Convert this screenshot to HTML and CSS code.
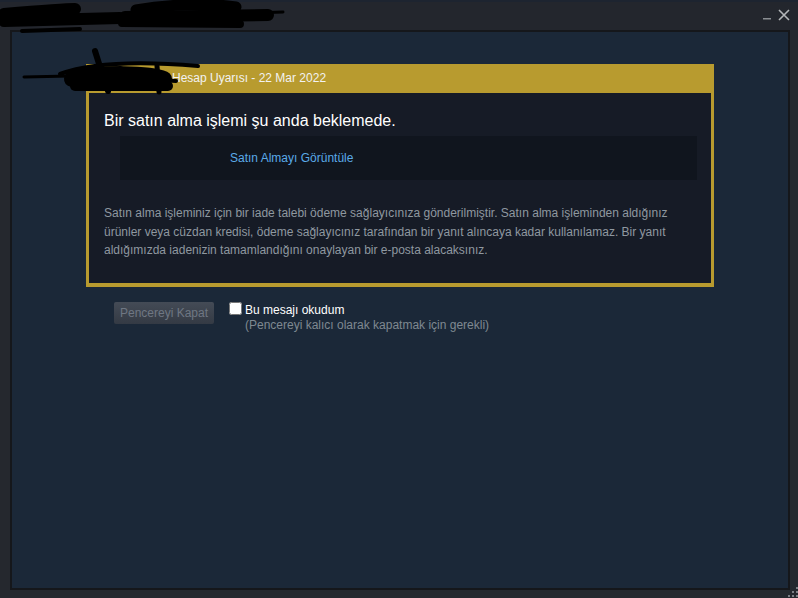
FILE: index.html
```html
<!DOCTYPE html>
<html lang="tr">
<head>
    <meta charset="UTF-8">
    <meta name="viewport" content="width=device-width, initial-scale=1.0">
    <title>Hesap Uyarısı</title>
    <link rel="stylesheet" href="styles.css">
</head>
<body>
    <div class="window">
        <div class="titlebar">
            <div class="controls">
                <svg class="minimize" width="10" height="10" viewBox="0 0 10 10"><rect x="1" y="8" width="8" height="1.5" fill="#8a8d92"/></svg>
                <svg class="close" width="12" height="12" viewBox="0 0 12 12"><path d="M1 1 L11 11 M11 1 L1 11" stroke="#b4b6b9" stroke-width="1.6"/></svg>
            </div>
        </div>
        <div class="frame">
            <div class="content">
                <div class="alert">
                    <div class="alert-head">Hesap Uyarısı - 22 Mar 2022</div>
                    <div class="alert-body">
                        <div class="alert-title">Bir satın alma işlemi şu anda beklemede.</div>
                        <div class="link-box">
                            <a href="#" class="link">Satın Almayı Görüntüle</a>
                        </div>
                        <p class="alert-text">Satın alma işleminiz için bir iade talebi ödeme sağlayıcınıza gönderilmiştir. Satın alma işleminden aldığınız ürünler veya cüzdan kredisi, ödeme sağlayıcınız tarafından bir yanıt alıncaya kadar kullanılamaz. Bir yanıt aldığımızda iadenizin tamamlandığını onaylayan bir e-posta alacaksınız.</p>
                    </div>
                </div>
                <div class="actions">
                    <button class="close-btn" disabled>Pencereyi Kapat</button>
                    <label class="ack">
                        <input type="checkbox" class="ack-box">
                        <span class="ack-text">
                            <span class="ack-main">Bu mesajı okudum</span>
                            <span class="ack-sub">(Pencereyi kalıcı olarak kapatmak için gerekli)</span>
                        </span>
                    </label>
                </div>
            </div>
        </div>

        <svg class="grip" width="12" height="12" viewBox="0 0 12 12">
            <rect x="10" y="1" width="2" height="2" fill="#7c7f85"/>
            <rect x="6" y="5" width="2" height="2" fill="#7c7f85"/>
            <rect x="10" y="5" width="2" height="2" fill="#7c7f85"/>
            <rect x="2" y="9" width="2" height="2" fill="#7c7f85"/>
            <rect x="6" y="9" width="2" height="2" fill="#7c7f85"/>
            <rect x="10" y="9" width="2" height="2" fill="#7c7f85"/>
        </svg>

        <!-- redaction marks from the original screenshot -->
        <svg class="scribble" width="798" height="100" viewBox="0 0 798 100">
            <g fill="none" stroke="#000" stroke-linecap="round">
                <path d="M4 14 C40 11 70 9 75 9" stroke-width="12"/>
                <path d="M4 21 L120 18" stroke-width="12"/>
                <path d="M136 10 C170 4 210 3 236 7" stroke-width="11"/>
                <path d="M125 17 L268 15" stroke-width="12"/>
                <path d="M122 23 L240 24" stroke-width="8"/>
                <path d="M22 31 L80 29" stroke-width="4"/>
                <path d="M250 13 L283 12" stroke-width="3"/>
                <path d="M24 77 L70 76" stroke-width="3"/>
                <path d="M60 74 C90 63 140 61 198 66" stroke-width="4"/>
                <path d="M72 79 C100 72 150 73 164 79" stroke-width="16"/>
                <path d="M75 86 L168 86" stroke-width="10"/>
                <path d="M95 51 L101 70" stroke-width="6"/>
                <path d="M157 66 L159 92" stroke-width="5"/>
                <path d="M106 84 L108 91" stroke-width="6"/>
                <path d="M160 80 L176 81" stroke-width="4"/>
            </g>
        </svg>
    </div>
</body>
</html>
```

FILE: styles.css
```css
* {
    margin: 0;
    padding: 0;
    box-sizing: border-box;
}

body {
    background: #23262d;
    font-family: "Liberation Sans", Arial, sans-serif;
    font-size: 12px;
}

.window {
    position: relative;
    width: 798px;
    height: 598px;
    display: flex;
    flex-direction: column;
    background: #25282e;
    overflow: hidden;
}

.titlebar {
    height: 30px;
    display: flex;
    justify-content: flex-end;
    align-items: flex-start;
    background: #23262d;
    border-top: 2px solid #1d2430;
}

.controls {
    display: flex;
    gap: 6px;
    padding: 7px 8px 0 0;
}

.minimize {
    margin-top: 1px;
}

.frame {
    flex: 1;
    padding: 0 8px 8px 10px;
}

.content {
    height: 100%;
    background: #1b2838;
    border: 2px solid #15171b;
    padding: 32px 0 0 74px;
}

.alert {
    width: 628px;
    background: #b89b2f;
    padding: 0 3px 4px;
}

.alert-head {
    height: 29px;
    line-height: 29px;
    padding-left: 83px;
    color: #f2f2f2;
    font-size: 12px;
}

.alert-body {
    background: #161b26;
    padding: 18px 14px 23px 15px;
}

.alert-title {
    font-size: 16px;
    line-height: 19px;
    color: #ffffff;
}

.link-box {
    margin: 6px 0 0 16px;
    height: 44px;
    background: #10151e;
    display: flex;
    align-items: center;
    padding-left: 110px;
}

.link {
    color: #5aaae8;
    text-decoration: none;
    font-size: 12px;
}

.alert-text {
    margin-top: 24px;
    margin-right: -6px;
    font-size: 12px;
    line-height: 18.5px;
    color: #8f98a0;
}

.actions {
    display: flex;
    align-items: flex-start;
    margin: 15px 0 0 28px;
}

.close-btn {
    width: 100px;
    height: 22px;
    border: none;
    border-radius: 2px;
    background: linear-gradient(#444b56, #343a44);
    color: #6f7783;
    font: 12px "Liberation Sans", Arial, sans-serif;
}

.ack {
    display: flex;
    align-items: flex-start;
    margin-left: 15px;
}

.ack-box {
    width: 13px;
    height: 13px;
    margin: 0 3px 0 0;
}

.ack-text {
    display: flex;
    flex-direction: column;
    line-height: 15px;
}

.ack-main {
    color: #ffffff;
    margin-top: 1px;
}

.ack-sub {
    color: #7f8891;
}

.grip {
    position: absolute;
    right: 0;
    bottom: 0;
}

.scribble {
    position: absolute;
    left: 0;
    top: 0;
    pointer-events: none;
}
```
